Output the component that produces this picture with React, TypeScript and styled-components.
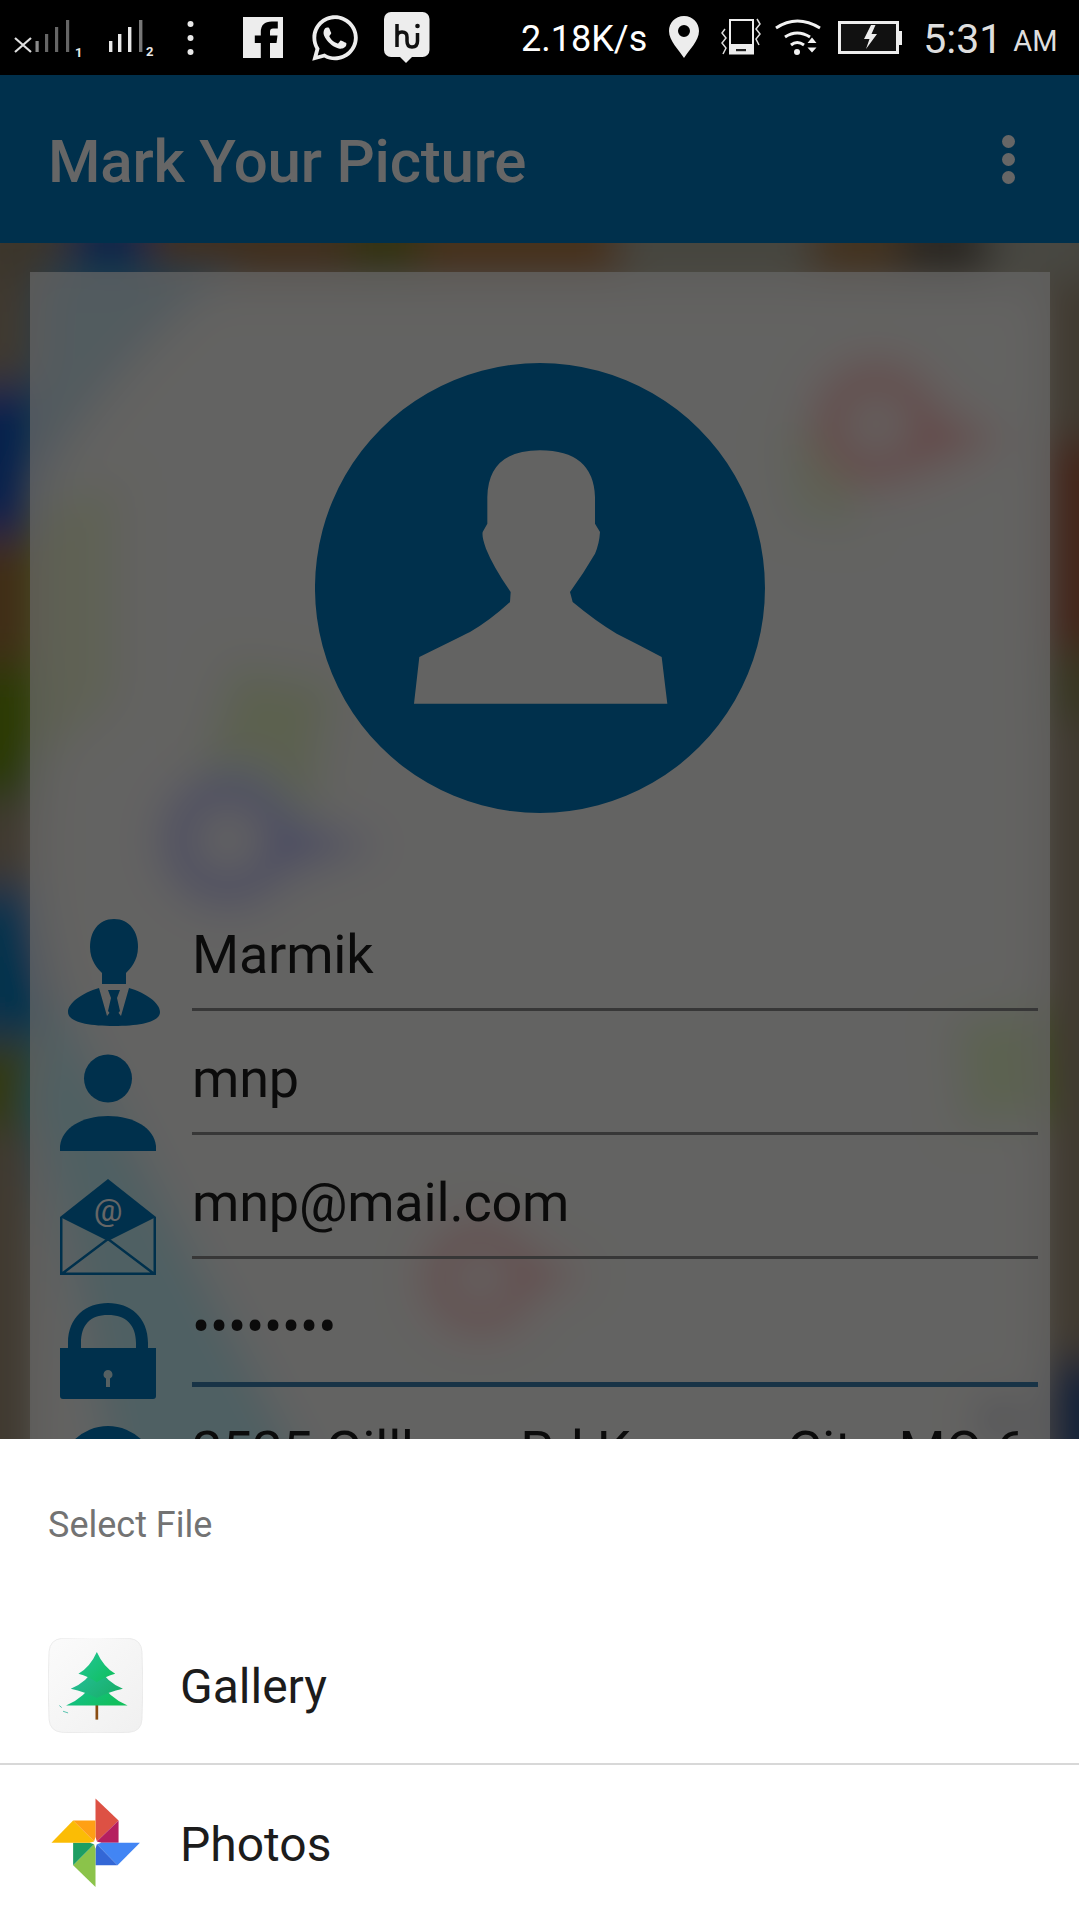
import React from "react";
import styled, { createGlobalStyle } from "styled-components";
import { FaWhatsapp } from "react-icons/fa";

const Global = createGlobalStyle`
  html, body { margin: 0; padding: 0; background: #fff; }
  body { font-family: Roboto, "Liberation Sans", sans-serif; }
`;

const Page = styled.div`
  width: 1079px;
  height: 1920px;
  display: flex;
  flex-direction: column;
  overflow: hidden;
`;

const StatusBar = styled.div`
  flex: 0 0 75px;
  height: 75px;
  background: #000;
  display: flex;
  align-items: stretch;
  color: #fff;
`;

const StatusIcon = styled.svg<{ $gap?: number }>`
  display: block;
  height: 75px;
  flex: none;
  margin-left: ${(p) => p.$gap ?? 0}px;
`;

const WhatsApp = styled(FaWhatsapp)`
  flex: none;
  align-self: center;
  width: 52px;
  height: 52px;
  color: #ededed;
  margin-left: 26px;
`;

const StatusText = styled.span<{ $gap: number; $size: number; $weight: number; $color: string; $top: number }>`
  flex: none;
  margin-left: ${(p) => p.$gap}px;
  padding-top: ${(p) => p.$top}px;
  font-size: ${(p) => p.$size}px;
  font-weight: ${(p) => p.$weight};
  color: ${(p) => p.$color};
  line-height: 75px;
  white-space: nowrap;
`;

const Stage = styled.div`
  flex: 1 1 0;
  min-height: 0;
  position: relative;
  overflow: hidden;
  display: flex;
  flex-direction: column;
`;

const Backdrop = styled.svg`
  position: absolute;
  left: 0;
  top: 0;
  z-index: 0;
`;

const Scrim = styled.div`
  position: absolute;
  inset: 0;
  background: rgba(0, 0, 0, 0.6);
  z-index: 2;
`;

const AppBar = styled.header`
  position: relative;
  z-index: 1;
  flex: 0 0 168px;
  background: #0078bd;
  display: flex;
  align-items: center;
  justify-content: space-between;
  padding: 0 64px 0 48px;
`;

const AppTitle = styled.h1`
  margin: 5px 0 0;
  font-size: 60px;
  font-weight: 500;
  letter-spacing: -0.2px;
  color: #fff;
  line-height: 70px;
`;

const OverflowMenu = styled.div`
  display: flex;
  flex-direction: column;
  gap: 5px;
`;

const MenuDot = styled.span`
  width: 13px;
  height: 13px;
  border-radius: 50%;
  background: #fff;
`;

const Card = styled.main`
  position: relative;
  z-index: 1;
  flex: none;
  margin: 29px 29px 0 30px;
  padding-top: 91px;
  background: rgba(255, 255, 255, 0.72);
`;

const Avatar = styled.svg`
  display: block;
  width: 450px;
  height: 450px;
  margin: 0 auto 105px;
`;

const Form = styled.div`
  padding: 0 12px 0 30px;
`;

const Row = styled.div`
  display: flex;
  align-items: flex-start;
  height: 124px;
`;

const IconCell = styled.div<{ $top: number; $inset: number }>`
  flex: 0 0 132px;
  padding: ${(p) => p.$top}px 0 0 ${(p) => p.$inset}px;
  box-sizing: border-box;
`;

const FieldIcon = styled.svg`
  display: block;
  overflow: visible;
`;

const Field = styled.div<{ $focused?: boolean }>`
  flex: 1;
  min-width: 0;
  height: ${(p) => (p.$focused ? 97 : 93)}px;
  box-sizing: border-box;
  padding-top: 5px;
  border-bottom: ${(p) => (p.$focused ? "5px solid #3e7fb0" : "3px solid #8a8a8a")};
  font-size: 54px;
  line-height: 64px;
  letter-spacing: -0.2px;
  color: #1c1c1c;
  white-space: nowrap;
  overflow: hidden;
`;

const Sheet = styled.section`
  flex: 0 0 481px;
  background: #fff;
  display: flex;
  flex-direction: column;
`;

const SheetTitle = styled.div`
  padding: 65px 0 61px 48px;
  font-size: 36px;
  line-height: 42px;
  color: #737373;
`;

const AppRow = styled.div<{ $divider?: boolean }>`
  flex: 0 0 ${(p) => (p.$divider ? 158 : 155)}px;
  box-sizing: border-box;
  display: flex;
  align-items: center;
  gap: 37px;
  padding-left: 48px;
  border-bottom: ${(p) => (p.$divider ? "2px solid #d8d8d8" : "none")};
`;

const AppIcon = styled.svg`
  display: block;
  flex: none;
  width: 95px;
  height: 95px;
`;

const AppName = styled.span`
  padding-top: 4px;
  font-size: 48px;
  line-height: 56px;
  color: #1c1c1c;
`;

const Signal = () => (
  <StatusIcon viewBox="0 0 84 75" width={84} $gap={0}>
    <path d="M15 38 L31 52 M31 38 L15 52" stroke="#e0e0e0" strokeWidth="2.2" />
    <rect x="35.5" y="41" width="3.2" height="11" fill="#8a8a8a" />
    <rect x="45" y="34" width="3.2" height="18" fill="#666" />
    <rect x="55" y="27" width="3.2" height="25" fill="#666" />
    <rect x="66" y="20" width="3.2" height="32" fill="#666" />
    <text x="75" y="57" fontFamily="Roboto" fontWeight="700" fontSize="13" fill="#e8e8e8">1</text>
  </StatusIcon>
);

const Signal2 = () => (
  <StatusIcon viewBox="104 0 54 75" width={54} $gap={20}>
    <rect x="109" y="41" width="3.4" height="11" fill="#e8e8e8" />
    <rect x="118" y="34" width="3.4" height="18" fill="#e8e8e8" />
    <rect x="128" y="27" width="3.4" height="25" fill="#e8e8e8" />
    <rect x="139" y="20" width="3.4" height="32" fill="#777" />
    <text x="146" y="56" fontFamily="Roboto" fontWeight="700" fontSize="13" fill="#e8e8e8">2</text>
  </StatusIcon>
);

const KebabSmall = () => (
  <StatusIcon viewBox="186 0 10 75" width={10} $gap={28}>
    <circle cx="190.5" cy="24" r="3" fill="#e8e8e8" />
    <circle cx="190.5" cy="38" r="3" fill="#e8e8e8" />
    <circle cx="190.5" cy="52" r="3" fill="#e8e8e8" />
  </StatusIcon>
);

const Facebook = () => (
  <StatusIcon viewBox="243 0 40 75" width={40} $gap={47}>
    <rect x="243" y="17" width="40" height="41" fill="#ededed" />
    <path d="M270 58 V43 h6.5 l1 -7.5 h-7.5 v-4 q0 -3 3 -3 h4.8 v-7 h-6 q-11 0 -11 10.5 v3.5 h-6 v7.5 h6 v15z" fill="#000" />
  </StatusIcon>
);

const Hi = () => (
  <StatusIcon viewBox="384 0 46 75" width={46} $gap={23}>
    <rect x="384" y="12" width="45.5" height="45" rx="7" fill="#ededed" />
    <path d="M400 57 H412 L406 63 Z" fill="#ededed" />
    <path d="M397 24 V47 M397 37 q0 -5 5 -5 q5 0 5 5 v4 q0 6 5 6 q5.500 0 5.500 -6 V33" fill="none" stroke="#111" strokeWidth="3.5" />
    <circle cx="417.500" cy="26" r="2.300" fill="#111" />
  </StatusIcon>
);

const Pin = () => (
  <StatusIcon viewBox="669 0 30 75" width={30} $gap={22}>
    <path fillRule="evenodd" d="M684 16 C675 16 669 23 669 31 C669 41 679 50 684 58 C689 50 699 41 699 31 C699 23 693 16 684 16 Z M684 25 a6 6 0 1 1 0 12 a6 6 0 1 1 0 -12 Z" fill="#ededed" />
  </StatusIcon>
);

const Vibrate = () => (
  <StatusIcon viewBox="720 0 42 75" width={42} $gap={21}>
    <rect x="730" y="20" width="23" height="33.500" fill="none" stroke="#ededed" strokeWidth="2" />
    <rect x="730" y="44" width="23" height="10" fill="#ededed" />
    <rect x="736" y="49" width="10" height="2.200" fill="#222" />
    <path d="M725 29 L722 33 L726 38 L722 43 L726 48 L723 54" fill="none" stroke="#ddd" strokeWidth="1.500" />
    <path d="M757 19 L760 24 L756 29 L760 34 L756 39 L759 45" fill="none" stroke="#ddd" strokeWidth="1.500" />
  </StatusIcon>
);

const Wifi = () => (
  <StatusIcon viewBox="774 0 48 75" width={48} $gap={12}>
    <path d="M776 28 Q797 14 820 28" fill="none" stroke="#f2f2f2" strokeWidth="3" />
    <path d="M785 37 Q797 29 810 37" fill="none" stroke="#f2f2f2" strokeWidth="3" />
    <path d="M791 45 Q797 40 804 45" fill="none" stroke="#f2f2f2" strokeWidth="3" />
    <circle cx="797" cy="52" r="3" fill="#f2f2f2" />
    <path d="M812 37.500 L816.500 43 H807.500 Z M807.500 47.500 H816.500 L812 52.500 Z" fill="#f2f2f2" />
  </StatusIcon>
);

const Battery = () => (
  <StatusIcon viewBox="837 0 65 75" width={65} $gap={15}>
    <rect x="839.500" y="22.500" width="58" height="30" fill="#111" stroke="#ededed" strokeWidth="3" />
    <rect x="899" y="31" width="3" height="14" fill="#ededed" />
    <path d="M871 25 L864 39 H869.500 L866 49 L877 34 H871.500 L875.500 25 Z" fill="#ededed" />
  </StatusIcon>
);

const Avatarshape = () => (
  <Avatar viewBox="75 68 1350 1350">
    <path
      fillRule="evenodd"
      fill="#0078bd"
      d="M750 68 A675 675 0 1 1 749.900 68 Z M372 1090 L388 950 Q500 895 540 875 Q600 840 660 785 L662 755 Q610 680 588 625 Q575 590 578 575 L592 550 L592 470 Q595 330 750 330 Q910 330 915 470 L915 550 L930 575 Q928 610 915 640 Q880 700 840 755 L848 785 Q920 845 980 880 Q1050 915 1115 950 L1132 1090 Z"
    />
  </Avatar>
);

const Businessman = () => (
  <FieldIcon width="92" height="107" viewBox="0 0 92 107">
    <path fill="#0078bd" d="M46 0 C62 0 70 13 70 28 C70 42 62 50 58 54 L58 65 H34 V54 C30 50 22 42 22 28 C22 13 30 0 46 0 Z" />
    <path fill="#0078bd" fillRule="evenodd" d="M31 69 C14 74 0 84 0 93 C0 103 20 107 46 107 C72 107 92 103 92 93 C92 84 78 74 61 69 L53 97 L49 92 H43 L39 97 Z" />
    <path fill="#0078bd" d="M40 71 H52 L49 79 L52 92 L46 99 L40 92 L43 79 Z" />
  </FieldIcon>
);

const PersonIcon = () => (
  <FieldIcon width="96" height="97" viewBox="0 0 96 97">
    <circle cx="48" cy="24.500" r="24" fill="#0078bd" />
    <path fill="#0078bd" d="M0 97 V92 C2 74 22 62 48 62 C74 62 94 74 96 92 V97 Z" />
  </FieldIcon>
);

const MailIcon = () => (
  <FieldIcon width="96" height="96" viewBox="0 0 96 96">
    <path fill="#0078bd" d="M48 0 L96 38 L48 62 L0 38 Z" />
    <text x="48" y="42" textAnchor="middle" fontFamily="Roboto" fontSize="32" fill="#fff">@</text>
    <path fill="none" stroke="#0078bd" strokeWidth="2.500" d="M1.250 38 V94.750 H94.750 V38 M3 94 L48 60 L93 94" />
  </FieldIcon>
);

const LockIcon = () => (
  <FieldIcon width="96" height="96" viewBox="0 0 96 96">
    <path fill="#0078bd" fillRule="evenodd" d="M8 46 V40 C8 14 26 0 48 0 C70 0 88 14 88 40 V46 H76 V40 C76 22 66 12 48 12 C30 12 21 22 21 40 V46 Z" />
    <path fill="#0078bd" fillRule="evenodd" d="M0 45 H96 V93 Q96 96 93 96 H3 Q0 96 0 93 Z M48 67 a4.500 4.500 0 0 0 -2 8.500 V84 H50 V75.500 a4.500 4.500 0 0 0 -2 -8.500 Z" />
  </FieldIcon>
);

const PinIcon = () => (
  <FieldIcon width="96" height="96" viewBox="0 0 96 96">
    <circle cx="48" cy="48" r="48" fill="#0078bd" />
  </FieldIcon>
);

const GalleryIcon = () => (
  <AppIcon viewBox="55 83 282 284">
    <defs>
      <linearGradient id="tile" x1="0" y1="0" x2="1" y2="1">
        <stop offset="0" stopColor="#fbfbfb" />
        <stop offset="1" stopColor="#f0f0f0" />
      </linearGradient>
      <linearGradient id="tree" x1="0" y1="0" x2="1" y2="0.6">
        <stop offset="0" stopColor="#14c09a" />
        <stop offset="1" stopColor="#12bf5c" />
      </linearGradient>
      <linearGradient id="tier" x1="0" y1="0" x2="1" y2="0.7">
        <stop offset="0" stopColor="#28c0a0" />
        <stop offset="1" stopColor="#18b06a" />
      </linearGradient>
      <linearGradient id="crown" x1="0" y1="0" x2="1" y2="0.8">
        <stop offset="0" stopColor="#24c49a" />
        <stop offset="1" stopColor="#10c060" />
      </linearGradient>
    </defs>
    <path d="M95 84 Q196 78 297 84 Q333 88 335 124 Q340 225 335 326 Q333 362 297 365 Q196 370 95 365 Q60 362 57 326 Q52 225 57 124 Q60 88 95 84 Z" fill="url(#tile)" stroke="#e4e4e4" strokeWidth="2" />
    <rect x="196" y="283" width="8" height="44" fill="#8a4d12" />
    <path d="M200 205 Q240 265 292 285 H108 Q160 265 200 205 Z" fill="url(#tree)" />
    <path d="M200 165 Q230 215 278 235 Q235 245 200 262 Q165 245 122 235 Q170 215 200 165 Z" fill="url(#tier)" />
    <path d="M200 125 Q220 170 255 190 Q225 198 200 215 Q175 198 145 190 Q180 170 200 125 Z" fill="url(#crown)" />
    <path d="M88 285 L95 291 M99 302 L114 307" stroke="#3bb8a0" strokeWidth="2.500" />
  </AppIcon>
);

const PhotosIcon = () => (
  <AppIcon viewBox="61 558 274 276">
    <path d="M198 568 L265 632 L198 697 Z" fill="#dd5144" />
    <path d="M265 632 V697 H198 Z" fill="#b51f5f" />
    <path d="M198 697 H327 L262 762 Z" fill="#4285f4" />
    <path d="M198 697 L262 762 H198 Z" fill="#3367d6" />
    <path d="M198 697 V825 L133 762 Z" fill="#8bc34a" />
    <path d="M198 697 L133 762 V697 Z" fill="#1e9e63" />
    <path d="M198 697 H70 L133 632 Z" fill="#fbbc05" />
    <path d="M198 697 L133 632 H198 Z" fill="#ffa015" />
    <path d="M198 680 L202 693 L215 697 L202 701 L198 714 L194 701 L181 697 L194 693 Z" fill="#fff" />
  </AppIcon>
);

const MapBackdrop = () => (
  <Backdrop width="1079" height="1364" viewBox="0 75 1079 1364">
    <defs>
      <filter id="blur" x="-10%" y="-10%" width="120%" height="120%">
        <feGaussianBlur stdDeviation="20" />
      </filter>
    </defs>
    <g filter="url(#blur)">
      <rect x="-50" y="200" width="1180" height="1300" fill="#a09078" />
      <rect x="40" y="290" width="1000" height="1200" fill="#e6e2d6" />
      <rect x="-20" y="210" width="90" height="70" fill="#94856a" />
      <rect x="70" y="210" width="80" height="70" fill="#0a58b8" />
      <rect x="150" y="210" width="200" height="70" fill="#a07648" />
      <rect x="350" y="210" width="70" height="70" fill="#808028" />
      <rect x="420" y="210" width="200" height="70" fill="#b07c44" />
      <rect x="620" y="210" width="190" height="70" fill="#b0b0a0" />
      <rect x="810" y="210" width="90" height="70" fill="#a88050" />
      <rect x="900" y="210" width="90" height="70" fill="#6a6458" />
      <rect x="990" y="210" width="110" height="70" fill="#b4b4a6" />
      <path d="M-40 385 H42 L34 535 H-40 Z" fill="#0050c0" />
      <path d="M-40 535 H38 V670 H-40 Z" fill="#a07038" />
      <path d="M-40 665 H42 V800 H-40 Z" fill="#6c9000" />
      <path d="M-40 885 H36 L68 1040 H-40 Z" fill="#0080c0" />
      <path d="M-40 1040 H40 V1130 H-40 Z" fill="#809020" />
      <path d="M1042 440 H1110 V650 H1042 Z" fill="#a85a38" />
      <path d="M1042 650 H1110 V720 H1042 Z" fill="#8a8650" />
      <path d="M1048 1360 H1110 V1480 H1048 Z" fill="#004f90" />
      <path d="M60 985 L330 1500 L110 1500 L30 1100 Z" fill="#30c8e0" />
      <path d="M40 270 L240 270 Q120 360 30 510 Z" fill="#50a0c0" />
      <path d="M230 660 L340 680 L310 840 L190 790 Z" fill="#a8d030" />
      <path d="M780 430 L860 410 L860 530 L790 520 Z" fill="#a0d030" opacity="0.7" />
      <path d="M950 1020 L1035 1000 L1045 1120 L960 1130 Z" fill="#a8d840" />
      <path d="M40 500 L120 480 L120 700 L40 770 Z" fill="#b0d030" opacity="0.7" />
      <circle cx="876" cy="424" r="46" fill="none" stroke="#f01010" strokeWidth="50" />
      <path d="M915 380 L1010 440 L925 485 Z" fill="#f01010" />
      <circle cx="228" cy="840" r="50" fill="none" stroke="#1820e0" strokeWidth="46" />
      <path d="M268 800 L385 845 L268 890 Z" fill="#1820e0" />
      <circle cx="480" cy="1278" r="42" fill="none" stroke="#f00820" strokeWidth="40" />
      <path d="M515 1240 L590 1275 L515 1310 Z" fill="#f00820" />
      <circle cx="1000" cy="1420" r="26" fill="#405080" />
    </g>
  </Backdrop>
);

export default function App() {
  return (
    <Page>
      <Global />
      <StatusBar>
        <Signal />
        <Signal2 />
        <KebabSmall />
        <Facebook />
        <WhatsApp />
        <Hi />
        <StatusText $gap={91} $size={36} $weight={400} $color="#fff" $top={2}>2.18K/s</StatusText>
        <Pin />
        <Vibrate />
        <Wifi />
        <Battery />
        <StatusText $gap={21} $size={41} $weight={400} $color="#dedede" $top={2}>5:31</StatusText>
        <StatusText $gap={11} $size={29} $weight={400} $color="#dedede" $top={4}>AM</StatusText>
      </StatusBar>
      <Stage>
        <MapBackdrop />
        <AppBar>
          <AppTitle>Mark Your Picture</AppTitle>
          <OverflowMenu>
            <MenuDot />
            <MenuDot />
            <MenuDot />
          </OverflowMenu>
        </AppBar>
        <Card>
          <Avatarshape />
          <Form>
            <Row>
              <IconCell $top={1} $inset={8}><Businessman /></IconCell>
              <Field>Marmik</Field>
            </Row>
            <Row>
              <IconCell $top={12} $inset={0}><PersonIcon /></IconCell>
              <Field>mnp</Field>
            </Row>
            <Row>
              <IconCell $top={13} $inset={0}><MailIcon /></IconCell>
              <Field>mnp@mail.com</Field>
            </Row>
            <Row>
              <IconCell $top={13} $inset={0}><LockIcon /></IconCell>
              <Field $focused>••••••••</Field>
            </Row>
            <Row>
              <IconCell $top={12} $inset={0}><PinIcon /></IconCell>
              <Field>2525 Gillham Rd Kansas City, MO 64108</Field>
            </Row>
          </Form>
        </Card>
        <Scrim />
      </Stage>
      <Sheet>
        <SheetTitle>Select File</SheetTitle>
        <AppRow $divider>
          <GalleryIcon />
          <AppName>Gallery</AppName>
        </AppRow>
        <AppRow>
          <PhotosIcon />
          <AppName>Photos</AppName>
        </AppRow>
      </Sheet>
    </Page>
  );
}
